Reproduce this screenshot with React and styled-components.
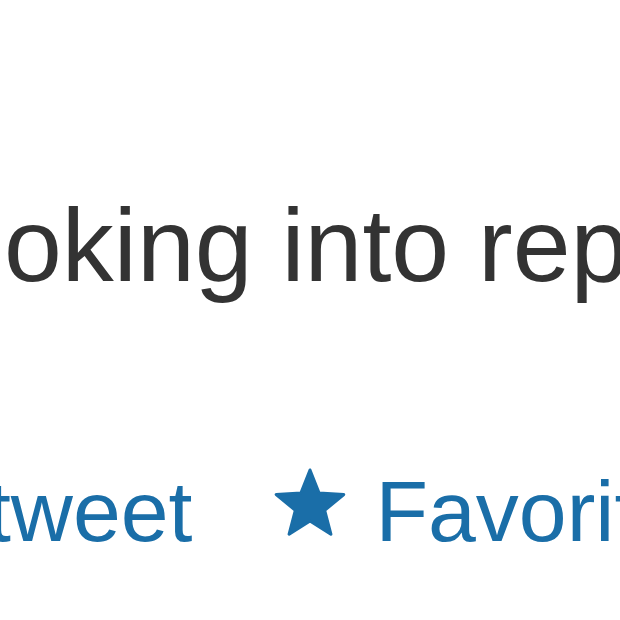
import React from 'react'
import styled, { createGlobalStyle } from 'styled-components'

const GlobalStyle = createGlobalStyle`
  html, body {
    margin: 0;
    padding: 0;
    background: #ffffff;
    overflow: hidden;
  }
`;

const Page = styled.div`
  width: 620px;
  height: 620px;
  overflow: hidden;
  padding-top: 193px;
  box-sizing: border-box;
  font-family: "Liberation Sans", Arial, Helvetica, sans-serif;
`;

const TweetText = styled.p`
  margin: 0 0 0 -77px;
  font-size: 104px;
  line-height: 104px;
  color: #333333;
  white-space: nowrap;
`;

const Actions = styled.div`
  display: flex;
  align-items: flex-start;
  margin: 171px 0 0 -123px;
  height: 86px;
  white-space: nowrap;
`;

const ActionLink = styled.a`
  display: flex;
  align-items: flex-start;
  gap: ${p => p.$gap || 0}px;
  margin-right: ${p => p.$space || 0}px;
  font-size: 86px;
  line-height: 86px;
  color: #1a6ea8;
  text-decoration: none;
`;

const StarIcon = styled.svg`
  flex: none;
  width: 74px;
  height: 68px;
`;

const Star = () => (
  <StarIcon viewBox="0 -1.5 74 68">
    <polygon
      points="37,0.5 46.1,23.5 70.8,25 51.7,40.8 57.9,64.7 37,51.5 16.1,64.7 22.3,40.8 3.2,25 27.9,23.5"
      fill="#1a6ea8"
      stroke="#1a6ea8"
      strokeWidth="3"
      strokeLinejoin="round"
    />
  </StarIcon>
);

export default function App() {
  return (
    <>
      <GlobalStyle />
      <Page>
        <TweetText>looking into reports</TweetText>
        <Actions>
          <ActionLink href="#" $space={80}>Retweet</ActionLink>
          <ActionLink href="#" $gap={29}>
            <Star />
            Favorite
          </ActionLink>
        </Actions>
      </Page>
    </>
  );
}
